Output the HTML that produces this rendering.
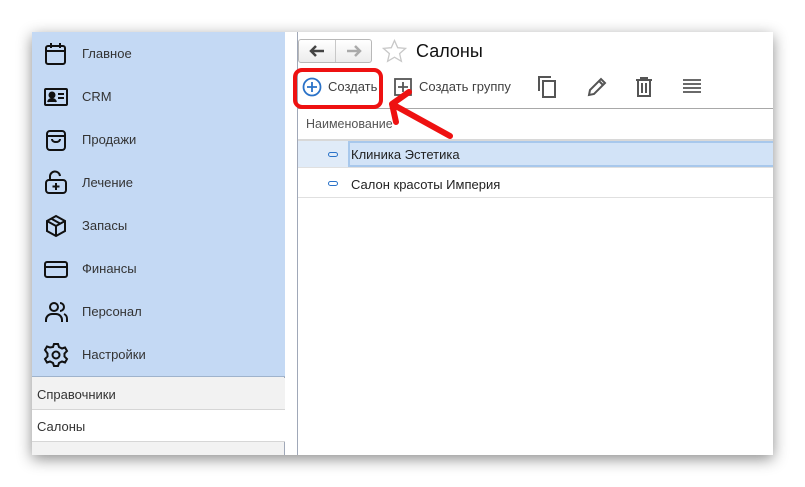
<!DOCTYPE html>
<html><head><meta charset="utf-8"><style>
*{margin:0;padding:0;box-sizing:border-box}
body{width:805px;height:487px;background:#fff;position:relative;overflow:hidden;font-family:"Liberation Sans",Arial,sans-serif;color:#333}
.win{position:absolute;left:32px;top:32px;width:741px;height:423px;background:#fff;box-shadow:0 4px 14px rgba(0,0,0,.45)}
.side{position:absolute;left:0;top:0;width:253px;height:423px;background:#f2f2f2;border-right:1px solid #a0a8b8}
.blue{position:absolute;left:0;top:0;width:253px;height:345px;background:#c4d9f4;border-bottom:1px solid #9fb3cc}
.it{position:absolute;left:0;height:43px;width:253px}
.it svg{position:absolute;left:11px;top:9px}
.it span{position:absolute;left:50px;top:14px;font-size:13px;color:#333}
.sub{position:absolute;left:0;width:253px;height:32px;font-size:13px;padding:9px 5px;border-bottom:1px solid #d6d6d6}
.vl{position:absolute;left:265px;top:0;width:1px;height:423px;background:#a0a8b8}
.txt{position:absolute;font-size:13px;color:#404040;white-space:nowrap}
</style></head><body>
<div class="win">
<div class="side">
 <div class="blue">
  <div class="it" style="top:0"><svg width="26" height="26" viewBox="0 0 26 26" fill="none" stroke="#111" stroke-width="2"><rect x="3" y="5" width="19" height="18" rx="2"/><path d="M3 10h19M8 2v5M17 2v5"/></svg><span>Главное</span></div>
  <div class="it" style="top:43px"><svg width="26" height="26" viewBox="0 0 26 26" fill="none" stroke="#111" stroke-width="2"><rect x="2" y="5" width="22" height="16" rx="1"/><circle cx="9" cy="11" r="2.5" fill="#111"/><path d="M5 18c1-4 7-4 8 0" fill="#111"/><path d="M15 10h6M15 14h6"/></svg><span>CRM</span></div>
  <div class="it" style="top:86px"><svg width="26" height="26" viewBox="0 0 26 26" fill="none" stroke="#111" stroke-width="2"><rect x="4" y="4" width="18" height="19" rx="3"/><path d="M4 9h18M9 12c0 4 8 4 8 0"/></svg><span>Продажи</span></div>
  <div class="it" style="top:129px"><svg width="26" height="26" viewBox="0 0 26 26" fill="none" stroke="#111" stroke-width="2"><rect x="3" y="10" width="20" height="13" rx="3"/><path d="M7 10V7a5 5 0 0 1 10-1M13 13v7M9.5 16.5h7"/></svg><span>Лечение</span></div>
  <div class="it" style="top:172px"><svg width="26" height="26" viewBox="0 0 26 26" fill="none" stroke="#111" stroke-width="2"><path d="M13 3l9 5v10l-9 5-9-5V8zM4 8l9 5 9-5M13 13v10M8 5.5l9 5"/></svg><span>Запасы</span></div>
  <div class="it" style="top:215px"><svg width="26" height="26" viewBox="0 0 26 26" fill="none" stroke="#111" stroke-width="2"><rect x="2" y="6" width="22" height="15" rx="2"/><path d="M2 11h22"/></svg><span>Финансы</span></div>
  <div class="it" style="top:258px"><svg width="26" height="26" viewBox="0 0 26 26" fill="none" stroke="#111" stroke-width="2"><circle cx="11" cy="8" r="4"/><path d="M3 23v-2a6 6 0 0 1 6-6h4a6 6 0 0 1 6 6v2M17 4a4 4 0 0 1 0 8M21 15a5 5 0 0 1 3 5v3"/></svg><span>Персонал</span></div>
  <div class="it" style="top:301px"><svg width="26" height="26" viewBox="0 0 26 26" fill="none" stroke="#111" stroke-width="2"><circle cx="13" cy="13" r="3.5"/><path d="M11 2h4l1 3 3 1.5 3-1 2 3.5-2.5 2.5v3l2.5 2.5-2 3.5-3-1-3 1.5-1 3h-4l-1-3-3-1.5-3 1-2-3.5 2.5-2.5v-3L2 8l2-3.5 3 1L10 5z"/></svg><span>Настройки</span></div>
 </div>
 <div class="sub" style="top:346px;background:#f2f2f2">Справочники</div>
 <div class="sub" style="top:378px;background:#fff">Салоны</div>
</div>
<div class="vl"></div>
</div>
<!-- content abs to body -->
<div style="position:absolute;left:298px;top:39px;width:74px;height:24px;border:1px solid #b8b8b8;border-radius:3px;background:linear-gradient(#fff,#ececec)"><div style="position:absolute;left:36px;top:0;width:1px;height:22px;background:#c8c8c8"></div>
<svg style="position:absolute;left:10px;top:5px" width="16" height="12" viewBox="0 0 16 12"><path d="M15 6H3M7 1L2 6l5 5" stroke="#444" stroke-width="2.5" fill="none"/></svg>
<svg style="position:absolute;left:47px;top:5px" width="16" height="12" viewBox="0 0 16 12"><path d="M1 6h12M9 1l5 5-5 5" stroke="#aaa" stroke-width="2.5" fill="none"/></svg></div>
<svg style="position:absolute;left:382px;top:39px" width="25" height="24" viewBox="0 0 25 24"><path d="M12.5 1.5l3.2 7.2 7.8.7-5.9 5.2 1.8 7.7-6.9-4.1-6.9 4.1 1.8-7.7L1.5 9.4l7.8-.7z" fill="none" stroke="#c8c8c8" stroke-width="1.3"/></svg>
<div class="txt" style="left:416px;top:41px;font-size:18px;color:#111">Салоны</div>
<svg style="position:absolute;left:302px;top:77px" width="20" height="20" viewBox="0 0 20 20"><circle cx="10" cy="10" r="8.5" fill="none" stroke="#2a72c8" stroke-width="1.8"/><path d="M10 5v10M5 10h10" stroke="#2a72c8" stroke-width="1.8"/></svg>
<div class="txt" style="left:328px;top:79px">Создать</div>
<svg style="position:absolute;left:394px;top:78px" width="18" height="18" viewBox="0 0 18 18"><rect x="1" y="1" width="16" height="16" fill="none" stroke="#555" stroke-width="1.8"/><path d="M9 4v10M4 9h10" stroke="#555" stroke-width="1.8"/></svg>
<div class="txt" style="left:419px;top:79px">Создать группу</div>
<svg style="position:absolute;left:537px;top:75px" width="22" height="24" viewBox="0 0 22 24"><path d="M2 16V2h12" fill="none" stroke="#555" stroke-width="2"/><rect x="6" y="6" width="12" height="16" fill="none" stroke="#555" stroke-width="2"/></svg>
<svg style="position:absolute;left:586px;top:76px" width="22" height="22" viewBox="0 0 22 22"><path d="M3 19l1-5L15 3l4 4L8 18zM13 5l4 4" fill="none" stroke="#555" stroke-width="2"/></svg>
<svg style="position:absolute;left:634px;top:76px" width="20" height="22" viewBox="0 0 20 22"><path d="M2 4h16M7 4V2h6v2M4 4v16h12V4M8 7v10M12 7v10" fill="none" stroke="#555" stroke-width="2"/></svg>
<svg style="position:absolute;left:682px;top:78px" width="20" height="16" viewBox="0 0 20 16"><path d="M1 2h18M1 6h18M1 10h18M1 14h18" stroke="#555" stroke-width="1.8"/></svg>
<div style="position:absolute;left:298px;top:108px;width:475px;height:1px;background:#a8a8a8"></div>
<div class="txt" style="left:306px;top:117px;font-size:12.5px;color:#555">Наименование</div>
<div style="position:absolute;left:298px;top:139px;width:475px;height:2px;background:#d8d8d8"></div>
<div style="position:absolute;left:298px;top:141px;width:475px;height:26px;background:#e0ebf8"></div>
<div style="position:absolute;left:348px;top:141px;width:425px;height:26px;background:#d2e3f7;border:2px solid #a8c8ec;border-right:none"></div>
<div style="position:absolute;left:328px;top:152px;width:10px;height:5px;border:1.5px solid #2a72c8;border-radius:3px"></div>
<div class="txt" style="left:351px;top:147px;color:#222">Клиника Эстетика</div>
<div style="position:absolute;left:298px;top:167px;width:475px;height:1px;background:#e0e0e0"></div>
<div style="position:absolute;left:328px;top:181px;width:10px;height:5px;border:1.5px solid #2a72c8;border-radius:3px"></div>
<div class="txt" style="left:351px;top:177px;color:#222">Салон красоты Империя</div>
<div style="position:absolute;left:298px;top:197px;width:475px;height:1px;background:#e0e0e0"></div>
<!-- red annotation -->
<div style="position:absolute;left:293px;top:68px;width:90px;height:41px;border:4.5px solid #ee1111;border-radius:9px"></div>
<svg style="position:absolute;left:0;top:0" width="805" height="487"><path d="M450 136L392 104M392 104L409 92M392 104L396 122" stroke="#ee1111" stroke-width="6" stroke-linecap="round" fill="none"/></svg>
</body></html>
